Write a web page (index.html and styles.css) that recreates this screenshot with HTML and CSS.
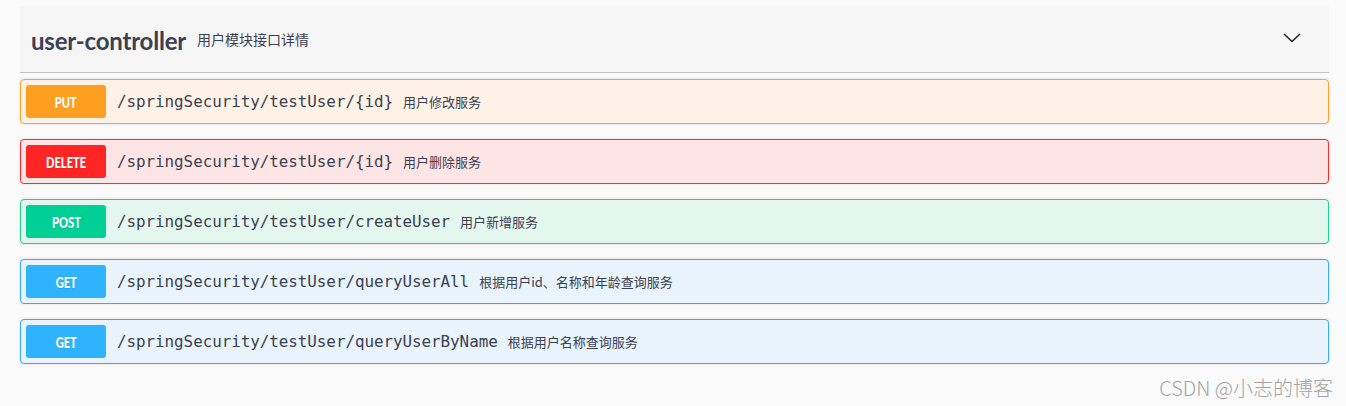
FILE: index.html
```html
<!DOCTYPE html>
<html lang="zh-CN">
<head>
<meta charset="utf-8">
<title>user-controller</title>
<link rel="stylesheet" href="styles.css">
</head>
<body>
<div class="page">
  <section class="tag">
    <div class="tag-header">
      <h3 class="tag-name">user-controller</h3>
      <span class="tag-desc">用户模块接口详情</span>
      <svg class="chevron" width="20" height="20" viewBox="0 0 20 20" aria-hidden="true">
        <path d="M2 6 L10 13.5 L18 6" fill="none" stroke="#222" stroke-width="1.6"/>
      </svg>
    </div>
    <div class="ops">
      <div class="op op-put">
        <span class="method"><span class="method-text">PUT</span></span>
        <span class="path">/springSecurity/testUser/{id}</span>
        <span class="desc">用户修改服务</span>
      </div>
      <div class="op op-delete">
        <span class="method"><span class="method-text">DELETE</span></span>
        <span class="path">/springSecurity/testUser/{id}</span>
        <span class="desc">用户删除服务</span>
      </div>
      <div class="op op-post">
        <span class="method"><span class="method-text">POST</span></span>
        <span class="path">/springSecurity/testUser/createUser</span>
        <span class="desc">用户新增服务</span>
      </div>
      <div class="op op-get">
        <span class="method"><span class="method-text">GET</span></span>
        <span class="path">/springSecurity/testUser/queryUserAll</span>
        <span class="desc">根据用户id、名称和年龄查询服务</span>
      </div>
      <div class="op op-get">
        <span class="method"><span class="method-text">GET</span></span>
        <span class="path">/springSecurity/testUser/queryUserByName</span>
        <span class="desc">根据用户名称查询服务</span>
      </div>
    </div>
  </section>
  <div class="watermark">CSDN @小志的博客</div>
</div>
</body>
</html>
```

FILE: styles.css
```css
html, body {
  margin: 0;
  padding: 0;
  background: #fafafa;
}

body {
  font-family: "Lato", "Noto Sans CJK SC", sans-serif;
  color: #3b4151;
}

.page {
  position: relative;
  height: 406px;
  padding: 6px 17px 0 20px;
  box-sizing: border-box;
}

.tag-header {
  display: flex;
  align-items: center;
  height: 66px;
  background: #f5f5f5;
  border-bottom: 1px solid #c4c4c4;
  padding: 0 27px 0 11px;
}

.tag-name {
  margin: 0;
  font-family: "Lato", sans-serif;
  font-weight: 700;
  font-size: 24px;
  color: #3b4151;
  letter-spacing: -0.2px;
  position: relative;
  top: 1px;
}

.tag-desc {
  margin-left: 11px;
  font-family: "Noto Sans CJK SC", sans-serif;
  font-size: 14px;
  color: #3b4151;
  flex: 1;
}

.chevron {
  display: block;
  margin-top: -2px;
}

.ops {
  display: flex;
  flex-direction: column;
  gap: 15px;
  margin-top: 6px;
}

.op {
  display: flex;
  align-items: center;
  height: 45px;
  box-sizing: border-box;
  padding: 0 5px;
  border: 1px solid;
  border-radius: 4px;
  box-shadow: 0 0 3px rgba(0, 0, 0, 0.12);
}

.method {
  display: flex;
  align-items: center;
  justify-content: center;
  width: 80px;
  height: 33px;
  border-radius: 3px;
  color: #fff;
  flex: none;
}

.method-text {
  display: inline-block;
  font-family: "Lato", sans-serif;
  font-weight: 900;
  font-size: 15px;
  transform: scaleX(0.74);
  text-shadow: 0 1px 0 rgba(0, 0, 0, 0.1);
}

.path {
  margin-left: 11px;
  font-family: "DejaVu Sans Mono", monospace;
  font-size: 15.9px;
  letter-spacing: -0.05px;
  color: #3b4151;
}

.desc {
  margin-left: 10px;
  font-family: "Noto Sans CJK SC", sans-serif;
  font-size: 13px;
  color: #3b4151;
}

.op-put { background: #fef1e6; border-color: #fca130; }
.op-put .method { background: #ff9f22; }

.op-delete { background: #fee5e5; border-color: #ff2a2a; }
.op-delete .method { background: #ff2525; }

.op-post { background: #e4f7ef; border-color: #1fcf8f; }
.op-post .method { background: #00cf96; }

.op-get { background: #e8f3fc; border-color: #3aaaf0; }
.op-get .method { background: #30b3ff; }

.watermark {
  position: absolute;
  right: 13px;
  bottom: 4px;
  font-family: "Noto Sans CJK SC", sans-serif;
  font-size: 20px;
  font-weight: 300;
  color: #a3a3a3;
  text-shadow: 0 0 1px rgba(255, 255, 255, 0.8);
}
```
